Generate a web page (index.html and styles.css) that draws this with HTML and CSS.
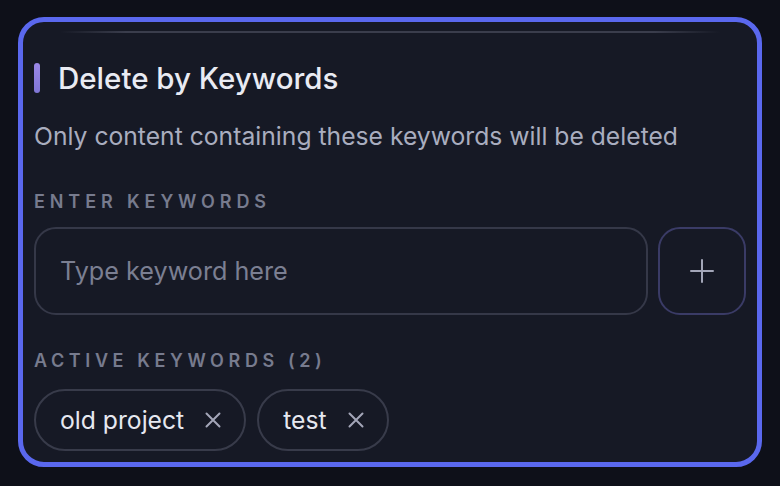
FILE: index.html
```html
<!DOCTYPE html>
<html lang="en">
<head>
<meta charset="utf-8">
<link rel="stylesheet" href="styles.css">
</head>
<body>
<div class="card">
  <div class="divider"></div>
  <div class="title-row">
    <span class="accent"></span>
    <h2 class="title">Delete by Keywords</h2>
  </div>
  <p class="subtitle">Only content containing these keywords will be deleted</p>
  <div class="label">Enter Keywords</div>
  <div class="input-row">
    <div class="input"><span class="placeholder">Type keyword here</span></div>
    <button class="add-btn" aria-label="Add">
      <svg width="24" height="24" viewBox="0 0 24 24" fill="none" stroke="currentColor" stroke-width="2" stroke-linecap="round"><path d="M12 1v22M1 12h22"/></svg>
    </button>
  </div>
  <div class="label label-active">Active Keywords (2)</div>
  <div class="chips">
    <span class="chip">old project
      <svg class="x" width="16" height="16" viewBox="0 0 16 16" fill="none" stroke="currentColor" stroke-width="2" stroke-linecap="round"><path d="M1.5 1.5l13 13M14.5 1.5l-13 13"/></svg>
    </span>
    <span class="chip">test
      <svg class="x" width="16" height="16" viewBox="0 0 16 16" fill="none" stroke="currentColor" stroke-width="2" stroke-linecap="round"><path d="M1.5 1.5l13 13M14.5 1.5l-13 13"/></svg>
    </span>
  </div>
</div>
</body>
</html>
```

FILE: styles.css
```css
* { box-sizing: border-box; }
html, body { margin: 0; height: 100%; }
body {
  background: #0e1019;
  padding: 17px 18px;
  font-family: Inter, "Noto Sans", sans-serif;
}
.card {
  width: 744px;
  height: 450px;
  border: 5px solid #5a68ee;
  border-radius: 26px;
  background: #161925;
  padding: 9px 11px 0;
  overflow: hidden;
}
.divider {
  height: 2px;
  margin: 0 26px 0 26px;
  background: linear-gradient(90deg, rgba(70,74,92,0) 0%, #3a3d4c 10%, #3a3d4c 90%, rgba(70,74,92,0) 100%);
}
.title-row {
  display: flex;
  align-items: center;
  gap: 18px;
  margin-top: 28px;
}
.accent {
  width: 6px;
  height: 30px;
  border-radius: 3px;
  background: linear-gradient(180deg, #9b88e8, #7f76d6);
}
.title {
  margin: 0;
  font-size: 29.5px;
  font-weight: 500;
  color: #e9ebf3;
  line-height: 34px;
}
.subtitle {
  margin: 25px 0 0;
  font-size: 24.7px;
  color: #a9adbf;
  line-height: 32px;
}
.label {
  margin-top: 40px;
  font-size: 18px;
  font-weight: 600;
  letter-spacing: 4.9px;
  text-transform: uppercase;
  color: #777b8e;
  line-height: 20px;
}
.input-row {
  display: flex;
  gap: 10px;
  margin-top: 15px;
}
.input {
  flex: 1;
  height: 88px;
  border: 2px solid #353848;
  border-radius: 22px;
  display: flex;
  align-items: center;
  padding-left: 24px;
}
.placeholder {
  font-size: 25.2px;
  color: #7b7f92;
}
.add-btn {
  width: 88px;
  height: 88px;
  border: 2px solid #3a3b66;
  border-radius: 22px;
  background: transparent;
  color: #a3a6b8;
  display: flex;
  align-items: center;
  justify-content: center;
  padding: 0;
}
.label-active { margin-top: 36px; letter-spacing: 4.6px; }
.chips {
  display: flex;
  gap: 11px;
  margin-top: 18px;
}
.chip {
  display: inline-flex;
  align-items: center;
  gap: 21px;
  height: 62px;
  padding: 0 23px 0 24px;
  border: 2px solid #383b4a;
  border-radius: 31px;
  font-size: 24.7px;
  color: #e6e8f0;
}
.chip .x { color: #a3a6b8; }
```
